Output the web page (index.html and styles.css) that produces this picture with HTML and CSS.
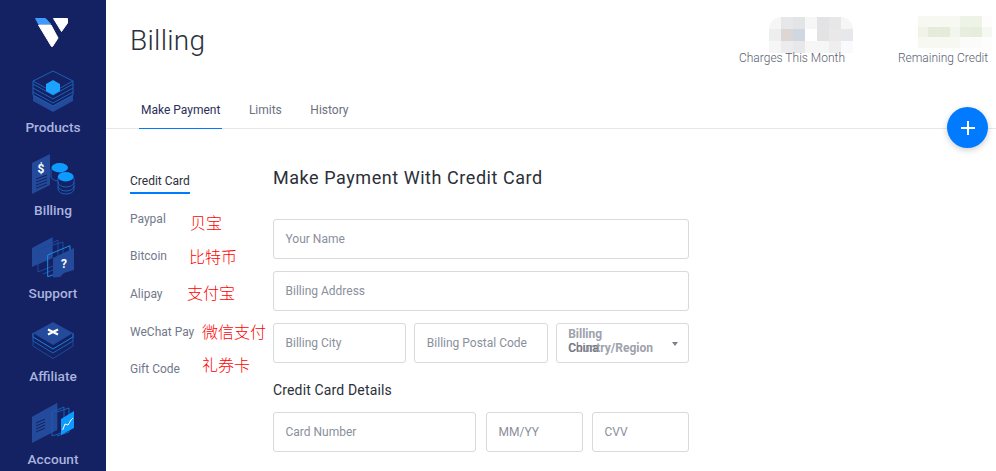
FILE: index.html
```html
<!DOCTYPE html>
<html lang="en">
<head>
<meta charset="utf-8">
<title>Billing</title>
<link rel="stylesheet" href="styles.css">
</head>
<body>
<div class="app">
  <nav class="sidebar">
    <svg class="logo" viewBox="0 0 36 30" width="36" height="30">
      <path d="M0.500 0.500H10.500L15.500 6H3.500Z" fill="#3d9bff" stroke="#3d9bff" stroke-linejoin="round"/>
      <path d="M3.500 7H16L23 20L17.500 28.500H16.500Z" fill="#fff" stroke="#fff" stroke-linejoin="round"/>
      <path d="M18.500 0.500H32.500V5L26.500 13.500Z" fill="#fff" stroke="#fff" stroke-linejoin="round"/>
    </svg>
    <a class="nav-item">
      <svg class="nav-icon" viewBox="0 0 42 42" width="42" height="42">
        <path d="M1 25L21 36L41 25V31L21 42L1 31Z" fill="#234a9b"/>
        <g fill="none" stroke="#1b62b8" stroke-width="1">
          <path d="M21 1L41 11L21 22L1 11Z"/>
          <path d="M1 11V14L21 25L41 14V11"/>
          <path d="M1 14V18L21 29L41 18V14"/>
          <path d="M1 18V22L21 33L41 22V18"/>
          <path d="M1 22V25L21 36L41 25V22"/>
        </g>
        <path d="M21 10L28 14V21L21 25L14 21V14Z" fill="#1ca3ff"/>
      </svg>
      <span>Products</span>
    </a>
    <a class="nav-item">
      <svg class="nav-icon" viewBox="0 0 42 42" width="42" height="42">
        <path d="M0 10L18 1V32L0 41Z" fill="#234a9b"/>
        <text x="9" y="20" class="glyph" text-anchor="middle">$</text>
        <path d="M4 26L15 22M4 29L15 25M4 32L15 28M4 35L15 31" stroke="#142163" stroke-width="1"/>
        <g fill="none" stroke="#1b5fb4"><path d="M19 16V24A9 5 0 0 0 26 28"/><path d="M26 25V36A8 5 0 0 0 42 36V25"/><path d="M26 29A8 5 0 0 0 42 29M26 33A8 5 0 0 0 42 33"/></g>
        <ellipse cx="27.700" cy="14.700" rx="8.300" ry="4.700" fill="#0e9bff"/>
        <ellipse cx="33.700" cy="23.700" rx="8" ry="4.700" fill="#0e9bff"/>
      </svg>
      <span>Billing</span>
    </a>
    <a class="nav-item">
      <svg class="nav-icon" viewBox="0 0 42 42" width="42" height="42">
        <path d="M0 12L20.700 1V22L0 31Z" fill="#234a9b"/>
        <path d="M6 14L26 4V28L6 36ZM11 12L31 6V30L11 38" fill="none" stroke="#1b4c9c"/>
        <path d="M15.700 19L38 9.700V33L15.700 40.700Z" fill="none" stroke="#1690ea" stroke-width="1"/>
        <path d="M21 22L42 12V34L32 37L28 41L21 41.500Z" fill="#234a9b"/>
        <text x="32" y="32" class="glyph" text-anchor="middle">?</text>
      </svg>
      <span>Support</span>
    </a>
    <a class="nav-item">
      <svg class="nav-icon" viewBox="0 0 42 42" width="42" height="42">
        <g fill="none"><path d="M1 14V18L21 30L41 18V14" stroke="#1685e0"/><path d="M1 18V22L21 34L41 22V18" stroke="#1b62b8"/><path d="M1 22V27L21 39.500L41 27V22" stroke="#1b4c9c"/></g>
        <path d="M21 3L41 14L21 26L1 14Z" fill="#234a9b"/>
        <path d="M16 10.500L26 15.500M26 10.500L16 15.500" stroke="#fff" stroke-width="2.200"/>
      </svg>
      <span>Affiliate</span>
    </a>
    <a class="nav-item">
      <svg class="nav-icon" viewBox="0 0 42 42" width="42" height="42">
        <path d="M0 14.700L25.300 0.700V28L0 41Z" fill="#234a9b"/>
        <path d="M4 21L13 17M4 24L13 20M4 27L13 23M4 30L13 26" stroke="#142163"/>
        <path d="M20 10L32 5V30L20 34ZM25 10L37 6V30L25 34" fill="none" stroke="#1b5fb4"/>
        <path d="M29 17L42 9V26L29 33Z" fill="#0e9bff"/>
        <path d="M30.700 28L33 22L36 23L39 18L41 16" fill="none" stroke="#fff"/>
      </svg>
      <span>Account</span>
    </a>
  </nav>
  <main class="main">
    <header class="header">
      <div class="title-row">
        <h1>Billing</h1>
        <div class="stats">
          <div class="stat stat-charges">
            <svg class="blur" viewBox="0 0 7 3" width="84" height="36" shape-rendering="crispEdges">
              <rect width="7" height="3" fill="#f6f6f7"/>
              <rect x="0" y="1" width="1" height="1" fill="#eeeeef"/><rect x="1" y="0" width="1" height="1" fill="#e7e7e9"/><rect x="2" y="0" width="1" height="1" fill="#e3e4e6"/><rect x="1" y="1" width="1" height="1" fill="#dcd6d4"/><rect x="2" y="1" width="1" height="1" fill="#cfd7e0"/><rect x="3" y="1" width="1" height="1" fill="#ffffff"/><rect x="4" y="0" width="1" height="1" fill="#e3e3e5"/><rect x="5" y="0" width="1" height="1" fill="#e7e7e8"/><rect x="4" y="1" width="1" height="1" fill="#e3e3e5"/><rect x="5" y="1" width="1" height="1" fill="#eae9e8"/><rect x="6" y="1" width="1" height="1" fill="#e7e8ec"/><rect x="1" y="2" width="1" height="1" fill="#ececee"/><rect x="2" y="2" width="1" height="1" fill="#e8e8ea"/><rect x="5" y="2" width="1" height="1" fill="#eeeeef"/><rect x="6" y="2" width="1" height="1" fill="#fafafc"/>
            </svg>
            <span>Charges This Month</span>
          </div>
          <div class="stat stat-credit">
            <svg class="blur" viewBox="0 0 7 3" width="84" height="32" shape-rendering="crispEdges">
              <rect width="7" height="3" fill="#f6f8f1"/>
              <rect x="0" y="1" width="1" height="1" fill="#eff3e8"/><rect x="1" y="1" width="1" height="1" fill="#e6ecdb"/><rect x="2" y="1" width="1" height="1" fill="#e4ebd9"/><rect x="3" y="1" width="1" height="1" fill="#f3f6ee"/><rect x="4" y="1" width="1" height="1" fill="#e7eedf"/><rect x="5" y="1" width="1" height="1" fill="#e6eddd"/><rect x="4" y="0" width="1" height="1" fill="#eef3e8"/><rect x="5" y="0" width="1" height="1" fill="#eef3e6"/><rect x="6" y="1" width="1" height="1" fill="#f6f8f2"/><rect x="6" y="0" width="1" height="1" fill="#fdfdfb"/><rect x="6" y="2" width="1" height="1" fill="#fdfdfb"/><rect x="5" y="2" width="1" height="1" fill="#fbfcf9"/><rect x="4" y="2" width="1" height="1" fill="#fbfcf9"/>
            </svg>
            <span>Remaining Credit</span>
          </div>
        </div>
      </div>
      <div class="tabs">
        <a class="tab tab-active">Make Payment</a>
        <a class="tab">Limits</a>
        <a class="tab">History</a>
      </div>
      <button class="fab" type="button" aria-label="Add">
        <svg viewBox="0 0 14 14" width="14" height="14"><path d="M7 0V14M0 7H14" stroke="#fff" stroke-width="2"/></svg>
      </button>
    </header>
    <div class="content">
      <aside class="methods">
        <a class="method method-active">Credit Card</a>
        <a class="method method-paypal">Paypal<span class="note note-paypal">贝宝</span></a>
        <a class="method method-bitcoin">Bitcoin<span class="note note-bitcoin">比特币</span></a>
        <a class="method method-alipay">Alipay<span class="note note-alipay">支付宝</span></a>
        <a class="method method-wechat">WeChat Pay<span class="note note-wechat">微信支付</span></a>
        <a class="method method-gift">Gift Code<span class="note note-gift">礼券卡</span></a>
      </aside>
      <section class="form">
        <h2>Make Payment With Credit Card</h2>
        <div class="row"><div class="field">Your Name</div></div>
        <div class="row"><div class="field">Billing Address</div></div>
        <div class="row row-three">
          <div class="field">Billing City</div>
          <div class="field">Billing Postal Code</div>
          <div class="field select">
            <span class="select-label">Billing Country/Region</span>
            <span class="select-value">China</span>
            <span class="caret"></span>
          </div>
        </div>
        <h3>Credit Card Details</h3>
        <div class="row row-card">
          <div class="field">Card Number</div>
          <div class="field">MM/YY</div>
          <div class="field">CVV</div>
        </div>
      </section>
    </div>
  </main>
</div>
</body>
</html>
```

FILE: styles.css
```css
* { box-sizing: border-box; }
html, body { margin: 0; height: 100%; overflow: hidden; background: #fff; }
body { font-family: Roboto, "Noto Sans CJK SC", sans-serif; color: #2b2f3a; }
.app { display: flex; height: 471px; overflow: hidden; }

.sidebar {
  width: 106px; flex: none; background: #142163;
  display: flex; flex-direction: column; align-items: center;
  padding-top: 18px; overflow: hidden;
}
.logo { display: block; flex: none; margin-bottom: 22px; }
.nav-item {
  display: flex; flex-direction: column; align-items: center;
  flex: none; height: 83px; color: #a9b4de; font-size: 13.7px; font-weight: 500;
}
.nav-item span { margin-top: 7px; line-height: 16px; }
.nav-icon { display: block; overflow: visible; }
.glyph { fill: #fff; font: 700 12px Roboto, sans-serif; }

.main { flex: 1; min-width: 0; display: flex; flex-direction: column; }
.header { position: relative; height: 129px; border-bottom: 1px solid #e6e6ec; padding-left: 24px; flex: none; }
.title-row { display: flex; justify-content: space-between; height: 92px; }
h1 { margin: 19px 0 0; font-size: 28px; line-height: 44px; font-weight: 300; color: #2b2f3a; letter-spacing: .3px; }
.stats { display: flex; }
.stat { position: relative; font-size: 12px; font-weight: 300; color: #5b6070; text-align: center; }
.stat span { position: relative; display: block; line-height: 14px; white-space: nowrap; }
.stat-charges { width: 196px; padding-top: 51px; }
.stat-credit { width: 106px; padding-top: 51px; }
.blur { position: absolute; display: block; }
.stat-charges .blur { left: 75px; top: 17px; border-radius: 12px 12px 0 0; }
.stat-credit .blur { left: 23px; top: 16px; }

.tabs { display: flex; padding-left: 9px; height: 37px; }
.tab { font-size: 12px; line-height: 18px; color: #6b7080; padding: 9px 2px 0; height: 37px; margin-right: 24.5px; }
.tab-active { color: #2b2f5a; border-bottom: 1px solid #007bff; }
.fab {
  position: absolute; right: 8px; top: 107px; width: 41px; height: 41px;
  border: 0; border-radius: 50%; background: #007bff; padding: 0;
  display: flex; align-items: center; justify-content: center;
  box-shadow: 0 2px 6px rgba(0,0,0,.2);
}

.content { display: flex; flex: 1; min-height: 0; }
.methods { width: 167px; flex: none; padding: 44px 0 0 24px; font-size: 12px; color: #72788a; display: flex; flex-direction: column; align-items: flex-start; }
.method { position: relative; line-height: 16px; white-space: nowrap; }
.method-active { color: #2b2f3a; padding-bottom: 3px; border-bottom: 2px solid #007bff; }
.method-paypal { margin-top: 17px; }
.method-bitcoin { margin-top: 21px; }
.method-alipay { margin-top: 22px; }
.method-wechat { margin-top: 22px; }
.method-gift { margin-top: 21px; }
.note { position: absolute; color: #ff0000; font: 300 16px/20px "Noto Sans CJK SC", sans-serif; }
.note-paypal { left: 60px; top: 1px; }
.note-bitcoin { left: 59px; top: -2px; }
.note-alipay { left: 57px; top: -4px; }
.note-wechat { left: 72px; top: -3px; }
.note-gift { left: 72px; top: -7px; }

.form { width: 416px; padding-top: 38px; }
h2 { margin: 0 0 30px; font-size: 18px; line-height: 22px; font-weight: 400; letter-spacing: .55px; color: #2b2f3a; }
h3 { margin: 18px 0 13px; font-size: 14px; line-height: 18px; font-weight: 400; letter-spacing: .15px; color: #2b2f3a; }
.row { display: flex; margin-bottom: 12px; }
.row-three { gap: 8px; margin-bottom: 0; }
.row-three .field { flex: 1; }
.row-card { gap: 9px; }
.row-card .field { flex: 0 0 97px; }
.row-card .field:first-child { flex: 0 0 203px; margin-right: 1px; }
.field {
  position: relative; flex: 1; height: 40px; border: 1px solid #d9d9de; border-radius: 3px;
  padding: 0 11.5px; font-size: 12px; line-height: 38px; color: #8a8f9c; white-space: nowrap;
}
.select { white-space: normal; }
.select-label { position: absolute; left: 11.5px; top: 3px; width: 100px; font-weight: 700; line-height: 14px; color: #9ea2ad; }
.select-value { position: absolute; left: 11.5px; top: 17px; line-height: 14px; font-weight: 400; color: #6f7480; }
.caret { position: absolute; right: 10px; top: 18px; border: 3px solid transparent; border-top: 4px solid #7c808c; border-bottom: 0; }
```
